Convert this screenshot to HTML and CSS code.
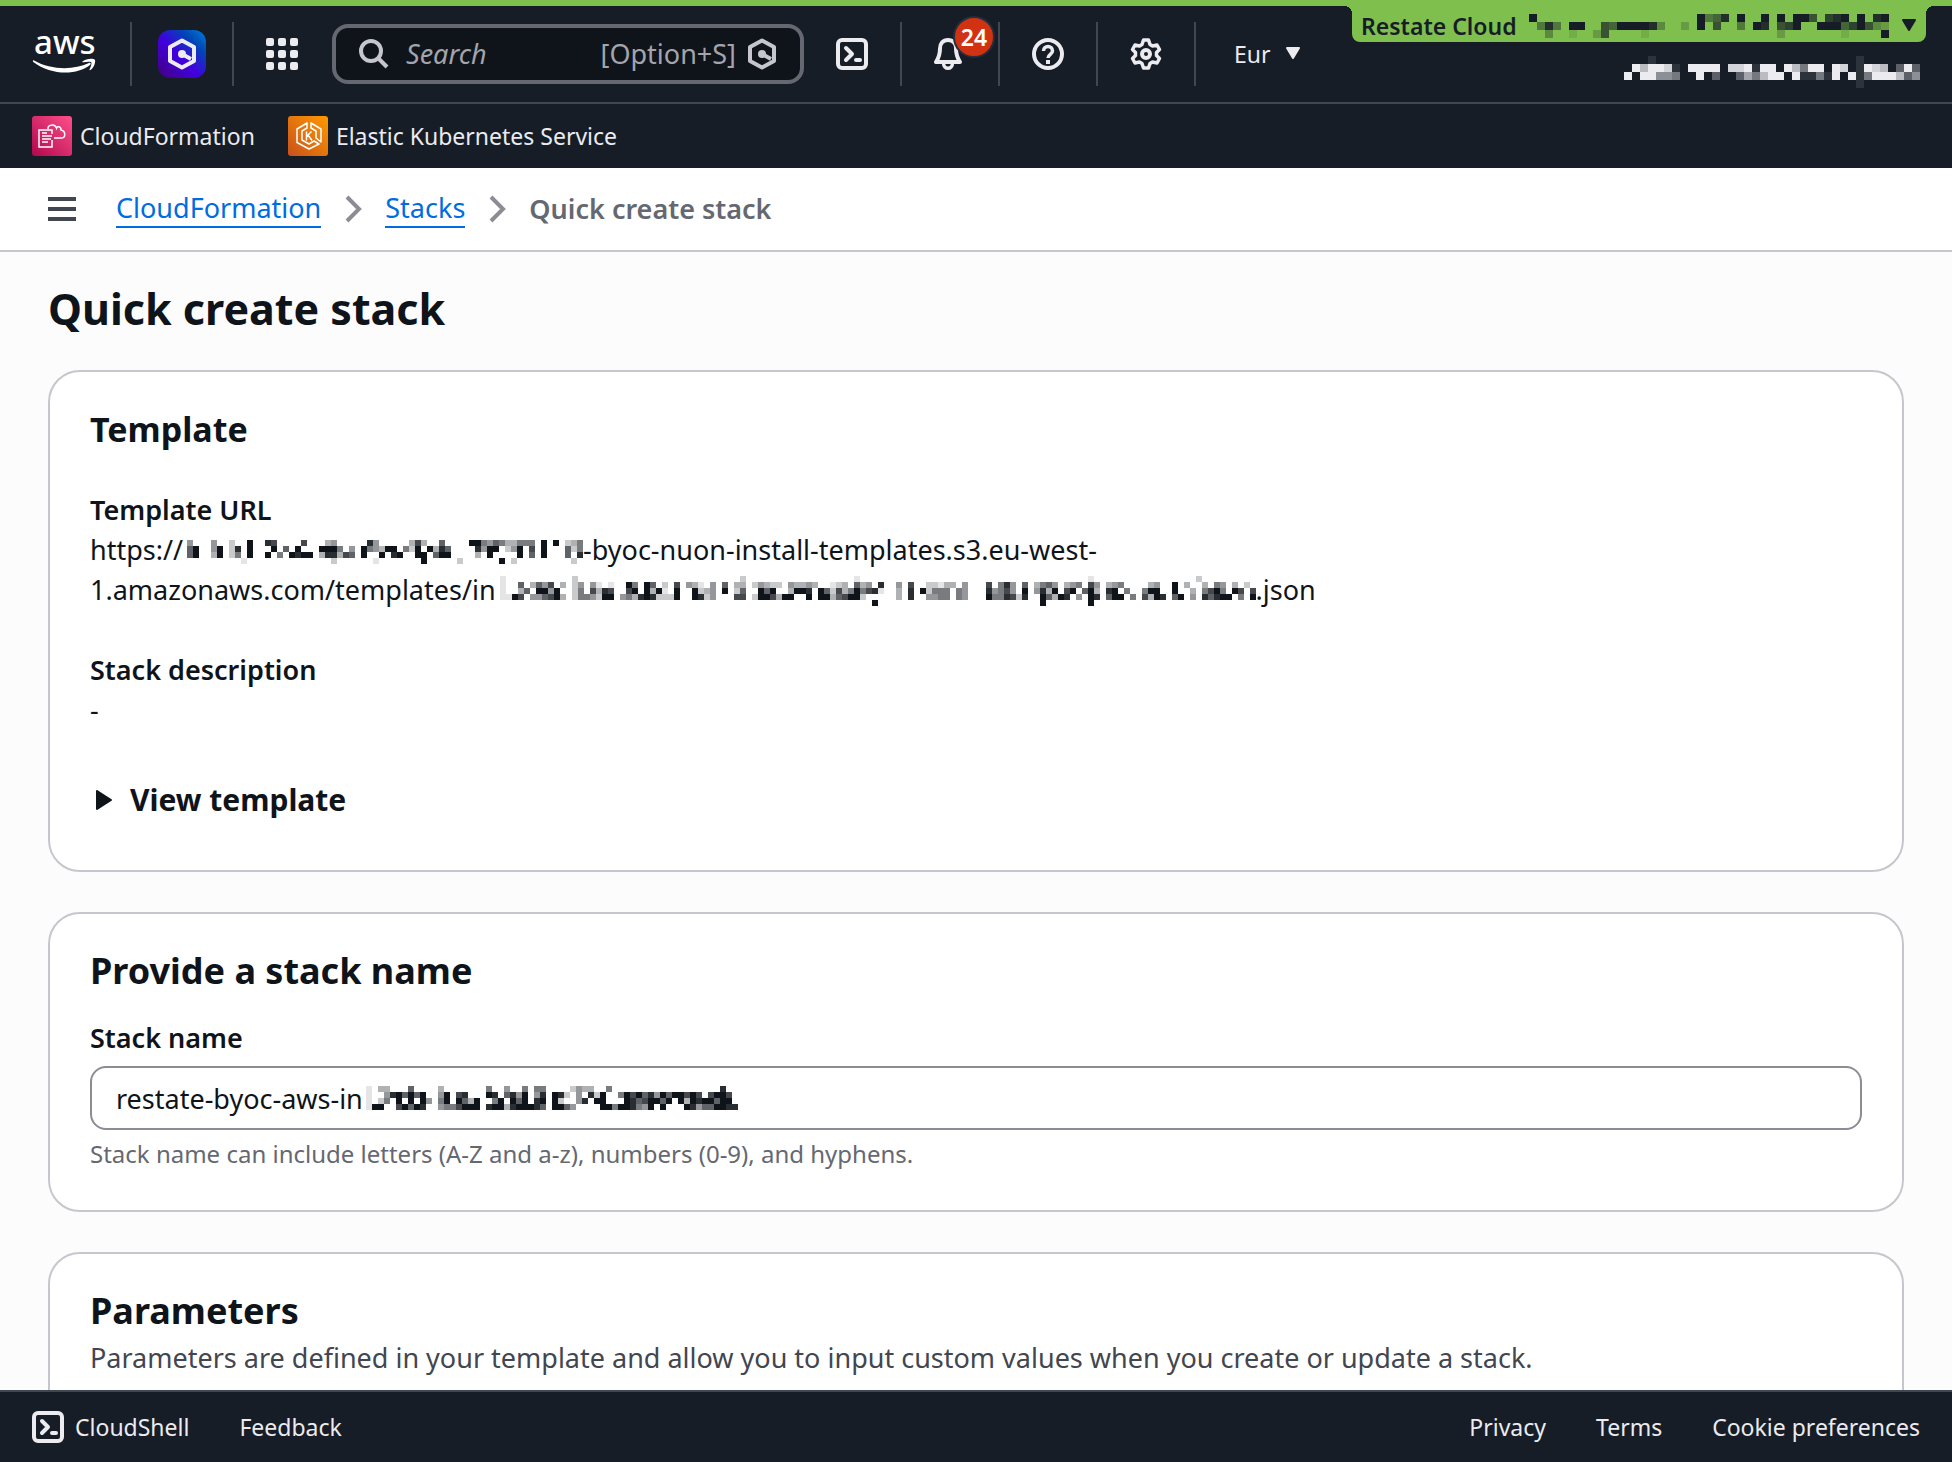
FILE: index.html
```html
<!DOCTYPE html>
<html lang="en">
<head>
<meta charset="utf-8">
<title>Quick create stack | CloudFormation</title>
<meta name="viewport" content="width=device-width, initial-scale=1">
<link rel="stylesheet" href="styles.css">
</head>
<body>
<svg width="0" height="0" class="symbols" aria-hidden="true">
  <symbol id="i-q" viewBox="0 0 32 32"><path d="M16 2.500 28 9v14L16 29.500 4 23V9z" fill="none" stroke="currentColor" stroke-width="4" stroke-linejoin="round"/><circle cx="16" cy="16" r="4"/><path d="m16 16 9 5" stroke="currentColor" stroke-width="4"/></symbol>
  <symbol id="i-shell" viewBox="0 0 32 32"><rect x="2" y="2" width="28" height="28" rx="4" fill="none" stroke="currentColor" stroke-width="4"/><path d="m10 10 6 6-6 6" fill="none" stroke="currentColor" stroke-width="4" stroke-linecap="round" stroke-linejoin="round"/><path d="M20 22h4" stroke="currentColor" stroke-width="4" stroke-linecap="round"/></symbol>
  <symbol id="i-chevron" viewBox="0 0 18 28"><path d="m2 2 12 12L2 26" fill="none" stroke="currentColor" stroke-width="4"/></symbol>
  <symbol id="i-down" viewBox="0 0 16 14"><path d="M2 1h12l-6 10z" stroke="currentColor" stroke-width="2" stroke-linejoin="round"/></symbol>
</svg>

<header class="header">
  <nav class="nav" aria-label="Global">
    <a class="cell" href="#" aria-label="AWS home">
      <svg class="logo" viewBox="0 0 64 40"><text x="1" y="20" class="logo-text">aws</text><path d="M1 26.500C18 36 40 36.500 56 29c1.600-.7 2.400.8 1 2C44 41.500 18 41.500.3 28c-1-.9-.3-2 .7-1.500z"/><path d="M49.500 27.500c3.500-3 10.500-3.300 12.300-1.800 1.200 1.600-.7 8-4.300 10.300-.8.4-1.300 0-.9-.8 1-2.300 2.400-5.800 1.700-6.800-.8-1-5-.6-8-.2-1 .1-1.400-.3-.8-.7z"/></svg>
    </a>
    <a class="cell cell-q" href="#" aria-label="Amazon Q"><span class="q-tile"><svg class="icon" viewBox="0 0 32 32"><use href="#i-q"/></svg></span></a>
    <button class="apps" aria-label="Services"><svg class="icon" viewBox="0 0 32 32"><g id="dots"><rect width="8" height="8" rx="2"/><rect x="12" width="8" height="8" rx="2"/><rect x="24" width="8" height="8" rx="2"/></g><use href="#dots" y="12"/><use href="#dots" y="24"/></svg></button>
    <label class="search">
      <svg class="icon" viewBox="0 0 32 32"><circle cx="13" cy="13" r="10" fill="none" stroke="currentColor" stroke-width="4"/><path d="m20 20 9 9" stroke="currentColor" stroke-width="4"/></svg>
      <input type="search" placeholder="Search" aria-label="Search">
      <span>[Option+S]</span>
      <svg class="icon" viewBox="0 0 32 32"><use href="#i-q"/></svg>
    </label>
    <button class="cell" aria-label="CloudShell"><svg class="icon" viewBox="0 0 32 32"><use href="#i-shell"/></svg></button>
    <button class="cell" aria-label="Notifications"><span class="bell"><svg class="icon" viewBox="0 0 32 32"><path d="M14 2c-5 0-8 3.500-8 8.500 0 5.500-1 9-4 13.500h24c-3-4.500-4-8-4-13.500C22 5.500 19 2 14 2z" fill="none" stroke="currentColor" stroke-width="4" stroke-linejoin="round"/><path d="M9.500 25c0 7 9 7 9 0" fill="none" stroke="currentColor" stroke-width="3.500"/></svg><span class="badge">24</span></span></button>
    <button class="cell" aria-label="Help"><svg class="icon" viewBox="0 0 32 32"><circle cx="16" cy="16" r="14" fill="none" stroke="currentColor" stroke-width="4"/><path d="M11.500 13c0-6 9-6 9 0 0 3.200-4.500 3.500-4.500 7" fill="none" stroke="currentColor" stroke-width="3.500"/><rect x="14" y="22" width="4" height="4"/></svg></button>
    <button class="cell" aria-label="Settings"><svg class="icon" viewBox="0 0 32 32"><path d="M13.500 2h5l1.500 4.500 2.500 1.500L27 7l2.500 4.500-3 3v3l3 3L27 25l-4.500-1-2.500 1.500-1.500 4.500h-5L12 25.500 9.500 24 5 25l-2.500-4.500 3-3v-3l-3-3L5 7l4.500 1L12 6.500z" fill="none" stroke="currentColor" stroke-width="3.500" stroke-linejoin="round"/><circle cx="16" cy="16" r="4" fill="none" stroke="currentColor" stroke-width="4"/></svg></button>
    <button class="region">Eur <svg class="caret" viewBox="0 0 16 14"><use href="#i-down"/></svg></button>
    <div class="account">
      <button class="account-tab"><span>Restate Cloud</span><svg class="redacted" data-name="account" data-cell="8"></svg><svg class="caret" viewBox="0 0 16 14"><use href="#i-down"/></svg></button>
      <div class="account-user"><svg class="redacted" data-name="user" data-cell="8"></svg></div>
    </div>
  </nav>
  <nav class="favorites" aria-label="Favorites">
    <a href="#"><svg class="service" viewBox="0 0 40 40"><defs><linearGradient id="pink" x1="0" y1="1" x2="1" y2="0"><stop stop-color="#b0084d"/><stop offset="1" stop-color="#ff4f8b"/></linearGradient></defs><rect width="40" height="40" rx="3" fill="url(#pink)"/><g fill="none" stroke="#fff" stroke-width="1.500"><path d="M20 18v-4H7v17h13v-7M10 17h5M10 20h10M10 23h9M10 26h6"/><path d="M22 22h7c5 0 5-7 0-8 0-4-4-4-4.500-2-2-5-9-3-8.500 1"/></g></svg>CloudFormation</a>
    <a href="#"><svg class="service" viewBox="0 0 40 40"><defs><linearGradient id="orange" x1="0" y1="1" x2="1" y2="0"><stop stop-color="#c8511b"/><stop offset="1" stop-color="#f90"/></linearGradient></defs><rect width="40" height="40" rx="3" fill="url(#orange)"/><g fill="none" stroke="#fff" stroke-width="1.500" stroke-linejoin="round"><path d="M19 7v5l-5 3v9l7 4 5-3 5 3-10 5-12-6.500V13z"/><path d="m23 7 10 6v13l-5-4v-7l-5-3zM18.500 15.500v9M23.500 15.500l-5 5M20 19l4 5.500"/></g></svg>Elastic Kubernetes Service</a>
  </nav>
</header>

<nav class="crumbs" aria-label="Breadcrumbs">
  <button class="menu" aria-label="Open navigation"><svg viewBox="0 0 28 24"><path d="M0 0h28v4H0zM0 10h28v4H0zM0 20h28v4H0z"/></svg></button>
  <ol>
    <li><a href="#">CloudFormation</a></li>
    <li><svg class="chevron" viewBox="0 0 18 28"><use href="#i-chevron"/></svg><a href="#">Stacks</a></li>
    <li><svg class="chevron" viewBox="0 0 18 28"><use href="#i-chevron"/></svg><span aria-current="page">Quick create stack</span></li>
  </ol>
</nav>

<main class="main">
  <h1>Quick create stack</h1>

  <section class="card">
    <h2 class="small">Template</h2>
    <dl>
      <dt>Template URL</dt>
      <dd>https://<svg class="redacted" data-name="bucket" data-cell="6"></svg>-byoc-nuon-install-templates.s3.eu-west-<br>1.amazonaws.com/templates/in<svg class="redacted low" data-name="template" data-cell="6"></svg>.json</dd>
      <dt>Stack description</dt>
      <dd>-</dd>
    </dl>
    <button class="expander"><svg viewBox="0 0 16 20"><path d="M1 1v18l14-9z" stroke="currentColor" stroke-width="2" stroke-linejoin="round"/></svg>View template</button>
  </section>

  <section class="card">
    <h2>Provide a stack name</h2>
    <div class="field">
      <label for="stack-name">Stack name</label>
      <div class="field-box">
        <input id="stack-name" type="text" value="restate-byoc-aws-in" aria-describedby="stack-hint">
        <svg class="redacted" data-name="stack" data-cell="6"></svg>
      </div>
      <p id="stack-hint" class="hint">Stack name can include letters (A-Z and a-z), numbers (0-9), and hyphens.</p>
    </div>
  </section>

  <section class="card">
    <h2>Parameters</h2>
    <p class="description">Parameters are defined in your template and allow you to input custom values when you create or update a stack.</p>
  </section>
</main>

<footer class="footer">
  <a href="#"><svg class="icon" viewBox="0 0 32 32"><use href="#i-shell"/></svg>CloudShell</a>
  <a href="#">Feedback</a>
  <a class="push" href="#">Privacy</a>
  <a href="#">Terms</a>
  <a href="#">Cookie preferences</a>
</footer>
<script src="redact.js"></script>
</body>
</html>
```
FILE: styles.css
```css
* { box-sizing: border-box; }
body {
  margin: 0;
  height: 100vh;
  display: flex;
  flex-direction: column;
  overflow: hidden;
  background: #fcfcfd;
  color: #0f141a;
  font: 400 27px/40px "Noto Sans", sans-serif;
}
h1, h2, p, dl, dd, ol { margin: 0; padding: 0; }
a { color: inherit; text-decoration: none; }
svg { display: block; flex: none; fill: currentColor; }
button {
  margin: 0;
  padding: 0;
  border: 0;
  background: none;
  color: inherit;
  font: inherit;
  display: flex;
  align-items: center;
}
input { font: inherit; color: inherit; }
.symbols { position: absolute; }
.icon { width: 32px; height: 32px; }
.caret { width: 16px; height: 14px; }
.redacted { display: inline-block; vertical-align: -4px; }
.redacted.low { vertical-align: -6px; }

/* Global header */
.header {
  flex: none;
  border-top: 6px solid #7fbf4d;
  background: #161d26;
  color: #ebebf0;
  font-size: 23px;
}
.nav {
  display: flex;
  align-items: center;
  height: 98px;
  border-bottom: 2px solid #424650;
}
.cell {
  display: flex;
  align-items: center;
  height: 64px;
  padding: 0 32px;
  border-right: 2px solid #424650;
}
.cell:first-child { padding: 0 33px; }
.cell-q { padding: 0 26px; }
.logo { width: 64px; height: 40px; fill: #fff; overflow: visible; }
.logo-text { font-size: 33px; font-weight: 500; }
.q-tile {
  padding: 8px;
  border-radius: 12px;
  background: linear-gradient(45deg, #43008c 8%, #4100e0 45%, #0046b4 75%, #0080dc);
}
.apps { padding: 0 34px 0 32px; }
.search {
  display: flex;
  align-items: center;
  gap: 10px;
  width: 472px;
  height: 60px;
  padding: 0 22px;
  border: 4px solid #656871;
  border-radius: 16px;
  background: #0f141a;
  color: #c6c6cd;
}
.search input {
  flex: 1;
  min-width: 0;
  padding: 0 6px;
  border: 0;
  background: none;
  outline: 0;
  font-size: 27px;
}
.search input::placeholder { color: #a4a4ad; font-style: italic; opacity: 1; }
.search span { color: #a4a4ad; font-size: 27px; }
.bell { position: relative; }
.badge {
  position: absolute;
  left: 19px;
  top: -22px;
  width: 42px;
  height: 42px;
  border: 2px solid #232f3e;
  border-radius: 50%;
  background: #d13212;
  color: #fff;
  font-size: 23px;
  font-weight: 600;
  line-height: 38px;
  text-align: center;
}
.region { gap: 14px; padding-left: 38px; }
.account {
  align-self: stretch;
  margin-left: auto;
  margin-right: 26px;
  display: flex;
  flex-direction: column;
  gap: 14px;
}
.account-tab {
  position: relative;
  gap: 12px;
  width: 574px;
  height: 36px;
  padding: 4px 12px 0 9px;
  border-radius: 0 0 8px 8px;
  background: #7fbf4d;
  color: #161d26;
  font-weight: 600;
  line-height: 32px;
  white-space: nowrap;
}
.account-tab .caret { margin-left: auto; }
.account-tab::before,
.account-tab::after {
  content: "";
  position: absolute;
  top: 0;
  width: 8px;
  height: 8px;
}
.account-tab::before { left: -8px; background: radial-gradient(circle at 0 100%, transparent 8px, #7fbf4d 8px); }
.account-tab::after { right: -8px; background: radial-gradient(circle at 100% 100%, transparent 8px, #7fbf4d 8px); }
.account-user { display: flex; justify-content: flex-end; padding-right: 6px; }

.favorites {
  display: flex;
  align-items: center;
  gap: 33px;
  height: 64px;
  padding: 0 32px;
}
.favorites a { display: flex; align-items: center; gap: 8px; }
.service { width: 40px; height: 40px; }

/* Breadcrumbs */
.crumbs {
  flex: none;
  display: flex;
  align-items: center;
  gap: 40px;
  height: 84px;
  padding: 0 48px;
  border-bottom: 2px solid #c6c6cd;
  background: #fff;
}
.menu { color: #424650; }
.menu svg { width: 28px; height: 24px; }
.crumbs ol { display: flex; list-style: none; }
.crumbs li { display: flex; align-items: center; }
.crumbs a { color: #006ce0; line-height: 36px; border-bottom: 2px solid #006ce0; }
.crumbs span { color: #656871; font-weight: 600; line-height: 38px; }
.chevron { width: 18px; height: 28px; margin: 0 22px 0 24px; color: #8c8c94; }

/* Content */
.main {
  flex: 1;
  min-height: 0;
  overflow: hidden auto;
  scrollbar-width: none;
  padding: 30px 48px 40px;
  display: flex;
  flex-direction: column;
  gap: 40px;
}
h1 { margin-bottom: -6px; font-size: 43px; line-height: 54px; }
.card {
  flex: none;
  padding: 32px 40px 40px;
  border: 2px solid #c6c6cd;
  border-radius: 32px;
  background: #fff;
}
h2 { font-size: 36px; line-height: 50px; }
h2.small { font-size: 34px; }
dl { padding-top: 36px; }
dt, .field label { font-weight: 600; }
dd { margin-bottom: 40px; }
dd .redacted { margin-left: 4px; }
.expander { gap: 18px; margin: 50px 0 10px; padding-left: 6px; font-size: 30px; font-weight: 700; }
.expander svg { width: 16px; height: 20px; }
.field { padding-top: 22px; }
.field label { display: block; }
.field-box { position: relative; margin: 8px 0; }
.field-box input {
  display: block;
  width: 100%;
  height: 64px;
  padding: 0 24px;
  border: 2px solid #8c8c94;
  border-radius: 16px;
  background: #fff;
}
.field-box .redacted { position: absolute; left: 276px; top: 20px; }
.hint { color: #656871; font-size: 24px; line-height: 32px; }
.description { padding-top: 2px; color: #424650; }
.card:last-child { min-height: 320px; }

/* Footer */
.footer {
  flex: none;
  display: flex;
  align-items: center;
  gap: 50px;
  height: 72px;
  padding: 0 32px;
  border-top: 2px solid #424650;
  background: #161d26;
  color: #ebebf0;
  font-size: 23px;
}
.footer a { display: flex; align-items: center; gap: 11px; }
.footer .push { margin-left: auto; }
```
FILE: redact.js
```js
// Mosaic masks over private values. Each row lists runs as "column:shades",
// where a shade digit goes from 0 (clear) to 9 (solid ink).
const masks = {
  account: { cols: 45, ink: "#161d26", rows: [
    "0:9 21:9458 26:9 29:9 31:9 33:996 37:789 41:9 43:89",
    "1:484099 6:1 8:065999983 19:2 21:906 26:4 28:98 31:679 36:999579632",
    "2:3 5:1 8:26 14:1 31:2 39:1 44:9"] },
  user: { cols: 37, ink: "#ebebf0", rows: [
    "3:1 29:1",
    "1:979981 8:9999 13:889 16:199 20:97499 26:98 29:1987 34:393",
    "0:9 2:99554 9:9 11:3 14:36479909 22:11419 28:914999735",
    "29:1"] },
  bucket: { cols: 66, ink: "#0f141a", rows: [
    "0:4 4:4 7:2 10:9 13:87 19:7 23:34 30:84 37:373 42:6 47:995465 53:33555 59:9 61:9 63:235",
    "0:69 4:49 7:28 10:9 14:9 16:609 22:99950409541 32:299 36:52909 41:386 48:8499 53:249 57:7 59:9 63:625",
    "0:69 4:39 7:25 10:9 13:905 17:9899 22:388376 29:9 32:9089 38:990 41:699 48:309 55:906 59:9 63:608",
    "9:1 24:2 31:1 39:9 45:2 52:902 64:2"] },
  template: { cols: 126, ink: "#0f141a", rows: [
    "0:1 12:2 40:2 59:1 98:1 116:2",
    "0:1 3:6 5:3647 10:3 12:24 15:41 18:1 21:95 24:96 27:2 29:7 31:431 35:4 37:6 39:33 42:24322 48:43343 55:123 59:63 61:4 63:8 66:4 68:7 71:2213304 81:70584 87:6 89:3564 94:345 98:74 101:345 108:34 112:903 117:305403 124:2",
    "0:1 3:36 6:9949 12:25 15:7387 21:79 24:9391 29:9 32:9234 37:9 39:26 43:969 48:3998 53:96273595781 66:308 70:92555 76:54 81:84574 87:9 89:4839079 97:693 101:890 104:5 107:599 112:9 115:3 117:5795 122:9707",
    "0:1197 5:446793 12:2554299 20:4538982229 32:9824 39:77 42:29973 47:99 51:9 53:993679920 66:308 71:4455 76:54 81:955872 87:8 90:9639804 98:98 101:69905 107:739806904 117:8689905 125:9",
    "62:9 90:9 98:9"] },
  stack: { cols: 62, ink: "#0f141a", rows: [
    "0:1 2:33 7:6 12:3 20:5 23:4 26:5 28:55 34:243 37:3 40:5 59:8",
    "0:1 3:489 6:69 8:69 12:49 15:78 20:98 23:6849 28:48 31:98204 37:82 39:9 42:5979 46:68496 51:99797 57:7997",
    "0:1 2:2509 7:9 9:94 12:59 15:9639 21:59 24:96 26:9 28:89 31:92 35:4809 39:9 43:986 46:79969 52:93989 57:9699",
    "0:199 5:79698 12:4557999 20:899389 26:9986 31:9964 39:995 42:998549 49:9 53:984669988"] }
};
document.querySelectorAll(".redacted").forEach(svg => {
  const { cols, ink, rows } = masks[svg.dataset.name];
  const size = Number(svg.dataset.cell);
  svg.setAttribute("width", cols * size);
  svg.setAttribute("height", rows.length * size);
  svg.setAttribute("shape-rendering", "crispEdges");
  svg.style.fill = ink;
  svg.innerHTML = rows.map((row, y) => row.split(" ").map(run => {
    const [start, shades] = run.split(":");
    return [...shades].map((s, i) =>
      `<rect x="${(Number(start) + i) * size}" y="${y * size}" width="${size}" height="${size}" opacity="${s / 9}"/>`).join("");
  }).join("")).join("");
});
```
